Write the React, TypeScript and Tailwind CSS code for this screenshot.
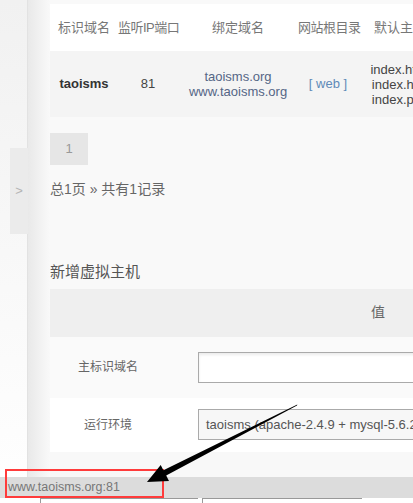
const font = "font-['Liberation_Sans','Noto_Sans_CJK_SC',sans-serif]";

const cols = 'grid grid-cols-[68px_60px_120px_60px_84px]';

export default function App() {
  return (
    <div className={`relative w-[413px] h-[503px] overflow-hidden bg-[#f9f9f9] ${font}`}>
      <div className="flex h-full">
        {/* left rail with toggle */}
        <div className="w-[28px] shrink-0 bg-gradient-to-b from-[#f1f1f1] to-white border-r border-[#e2e2e2] pt-[148px]">
          <div className="ml-[10px] w-[18px] h-[86px] bg-[#ebebeb] flex items-center justify-center text-[13px] text-[#b4b4b4]">
            &gt;
          </div>
        </div>

        {/* main content */}
        <div className="flex-1 min-w-0 pl-[22px] pt-[4px] bg-[linear-gradient(to_right,#e9e9e9,#f9f9f9_22px)]">
          <div className="w-[600px]">
            <div className={`${cols} h-[47px] items-center bg-white text-[13px] text-[#777] text-center whitespace-nowrap`}>
              <div>标识域名</div>
              <div className="tracking-[-0.5px]">监听IP端口</div>
              <div>绑定域名</div>
              <div className="tracking-[-0.5px]">网站根目录</div>
              <div>默认主页</div>
            </div>
            <div className={`${cols} h-[66px] items-center bg-[#f4f4f4] text-[13px] text-center whitespace-nowrap`}>
              <div className="font-bold text-[#333]">taoisms</div>
              <div className="text-[#444]">81</div>
              <div className="text-[#556686] leading-[15px]">
                <div>taoisms.org</div>
                <div>www.taoisms.org</div>
              </div>
              <div className="text-[#5f8ab8]">[ web ]</div>
              <div className="text-[#444] leading-[15px]">
                <div>index.html</div>
                <div>index.htm</div>
                <div>index.php</div>
              </div>
            </div>
          </div>

          <div className="mt-[16px] w-[38px] h-[32px] bg-[#e6e6e6] flex items-center justify-center text-[13px] text-[#999]">
            1
          </div>

          <div className="mt-[14px] text-[14px] text-[#666]">总1页 » 共有1记录</div>

          <div className="mt-[61px] text-[15px] text-[#555]">新增虚拟主机</div>

          <div className="mt-[5px] w-[600px]">
            <div className="grid grid-cols-[116px_1fr] h-[48px] items-center bg-[#efefef] text-[14px] text-[#666]">
              <div />
              <div className="w-[424px] text-center">值</div>
            </div>
            <div className="grid grid-cols-[116px_1fr] h-[61px] items-center bg-[#fafafa]">
              <div className="text-center text-[12px] text-[#666]">主标识域名</div>
              <div className="pl-[32px]">
                <div className="h-[31px] border border-[#aaa] bg-white shadow-[inset_0_2px_3px_rgba(0,0,0,0.08)]" />
              </div>
            </div>
            <div className="grid grid-cols-[116px_1fr] h-[54px] items-center bg-white">
              <div className="text-center text-[12px] text-[#666]">运行环境</div>
              <div className="pl-[32px]">
                <div className="h-[31px] border border-[#aaa] bg-[#f7f7f7] flex items-center px-[7px] text-[13px] text-[#555] whitespace-nowrap">
                  taoisms (apache-2.4.9 + mysql-5.6.25 + php-5.6.11)
                </div>
              </div>
            </div>
            <div className="h-[40px] bg-[#f8f8f8]" />
          </div>
        </div>
      </div>

      {/* browser status bar */}
      <div className="absolute left-0 right-0 bottom-0">
        <div className="h-[21px] bg-[#dcdcdc] flex items-center pl-[8px] text-[12.5px] text-[#777]">
          www.taoisms.org:81
        </div>
        <div className="h-[5px] bg-white flex">
          <div className="ml-[40px] w-[158px] border-t border-l border-[#999]" />
          <div className="ml-[4px] w-[160px] border-t border-l border-[#999]" />
        </div>
      </div>

      {/* annotation */}
      <div className="absolute left-[5px] top-[469px] w-[159px] h-[29px] border-2 border-[#ff3b3b]" />
      <svg className="absolute left-0 top-0" width="413" height="503" viewBox="0 0 413 503">
        <polygon
          points="297.3,404.6 297,405.4 166.2,475.6 169,480.9 147,482 160.7,464.9 163.4,470.2"
          fill="#000"
        />
      </svg>
    </div>
  );
}
